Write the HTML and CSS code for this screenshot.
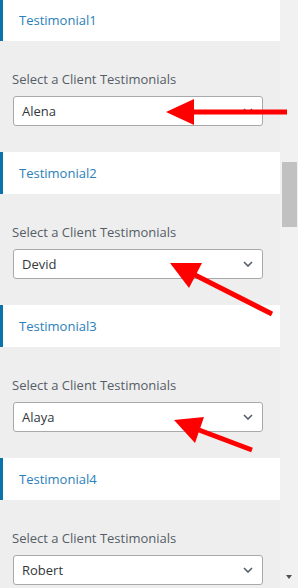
FILE: index.html
```html
<!DOCTYPE html>
<html lang="en">
  <head>
    <meta charset="UTF-8" />
    <meta name="viewport" content="width=device-width, initial-scale=1.0" />
    <title>Testimonials</title>
    <link rel="stylesheet" href="styles.css">
  </head>
  <body>
    <div class="frame">
      <div class="panel">
        <div class="section">
          <div class="section-title">Testimonial1</div>
          <div class="field">
            <label class="field-label">Select a Client Testimonials</label>
            <div class="select">
              <span>Alena</span>
              <svg class="chevron" width="10" height="6" viewBox="0 0 10 6"><path d="M1 1 L5 5 L9 1" /></svg>
            </div>
          </div>
        </div>

        <div class="section">
          <div class="section-title">Testimonial2</div>
          <div class="field">
            <label class="field-label">Select a Client Testimonials</label>
            <div class="select">
              <span>Devid</span>
              <svg class="chevron" width="10" height="6" viewBox="0 0 10 6"><path d="M1 1 L5 5 L9 1" /></svg>
            </div>
          </div>
        </div>

        <div class="section">
          <div class="section-title">Testimonial3</div>
          <div class="field">
            <label class="field-label">Select a Client Testimonials</label>
            <div class="select">
              <span>Alaya</span>
              <svg class="chevron" width="10" height="6" viewBox="0 0 10 6"><path d="M1 1 L5 5 L9 1" /></svg>
            </div>
          </div>
        </div>

        <div class="section">
          <div class="section-title">Testimonial4</div>
          <div class="field">
            <label class="field-label">Select a Client Testimonials</label>
            <div class="select">
              <span>Robert</span>
              <svg class="chevron" width="10" height="6" viewBox="0 0 10 6"><path d="M1 1 L5 5 L9 1" /></svg>
            </div>
          </div>
        </div>
      </div>

      <div class="scrollbar">
        <div class="thumb"></div>
        <div class="scroll-down"></div>
      </div>
    </div>

    <!-- red annotation arrows -->
    <svg class="arrows" width="298" height="588" viewBox="0 0 298 588">
      <line x1="287" y1="112" x2="190" y2="112" />
      <polygon points="166,112 194,99 194,125" />

      <line x1="272" y1="314" x2="195" y2="275" />
      <polygon points="170,263 202,263 189,288" />

      <line x1="252" y1="450" x2="199" y2="430" />
      <polygon points="174,420 204,417 195,443" />
    </svg>
  </body>
</html>
```

FILE: styles.css
```css
body {
  margin: 0;
  width: 298px;
  height: 588px;
  overflow: hidden;
  position: relative;
  background-color: #eeeeee;
  font-family: "Open Sans", "Noto Sans", sans-serif;
  color: #50575e;
}

.frame {
  display: flex;
  height: 588px;
}

.panel {
  width: 280px;
  margin-top: -1px;
}

/* one customizer block */
.section {
  height: 153px;
}

.section-title {
  height: 42px;
  display: flex;
  align-items: center;
  box-sizing: border-box;
  padding-left: 16px;
  background: #ffffff;
  border-left: 3px solid #0a73aa;
  color: #2b80b9;
  font-size: 13px;
}

.field {
  padding: 29px 17px 0 13px;
}

.field-label {
  display: block;
  line-height: 18px;
  font-size: 13px;
  color: #555d66;
  margin-left: -1px;
}

.select {
  margin-top: 8px;
  height: 30px;
  box-sizing: border-box;
  display: flex;
  align-items: center;
  justify-content: space-between;
  padding: 0 9px 0 8px;
  background: #ffffff;
  border: 1px solid #a7aaad;
  border-radius: 3px;
  font-size: 13px;
  color: #32373c;
}

.chevron path {
  fill: none;
  stroke: #555d66;
  stroke-width: 1.6;
}

/* fake scrollbar */
.scrollbar {
  width: 18px;
  display: flex;
  flex-direction: column;
  background: #f1f1f1;
}

.thumb {
  margin: 162px 1px 0 2px;
  height: 65px;
  background: #c1c1c1;
}

.scroll-down {
  margin: auto 0 9px 6px;
  width: 0;
  height: 0;
  border-left: 3.5px solid transparent;
  border-right: 3.5px solid transparent;
  border-top: 4px solid #505050;
}

.arrows {
  position: absolute;
  top: 0;
  left: 0;
  pointer-events: none;
}

.arrows line {
  stroke: #ff0000;
  stroke-width: 5;
}

.arrows polygon {
  fill: #ff0000;
}
```
